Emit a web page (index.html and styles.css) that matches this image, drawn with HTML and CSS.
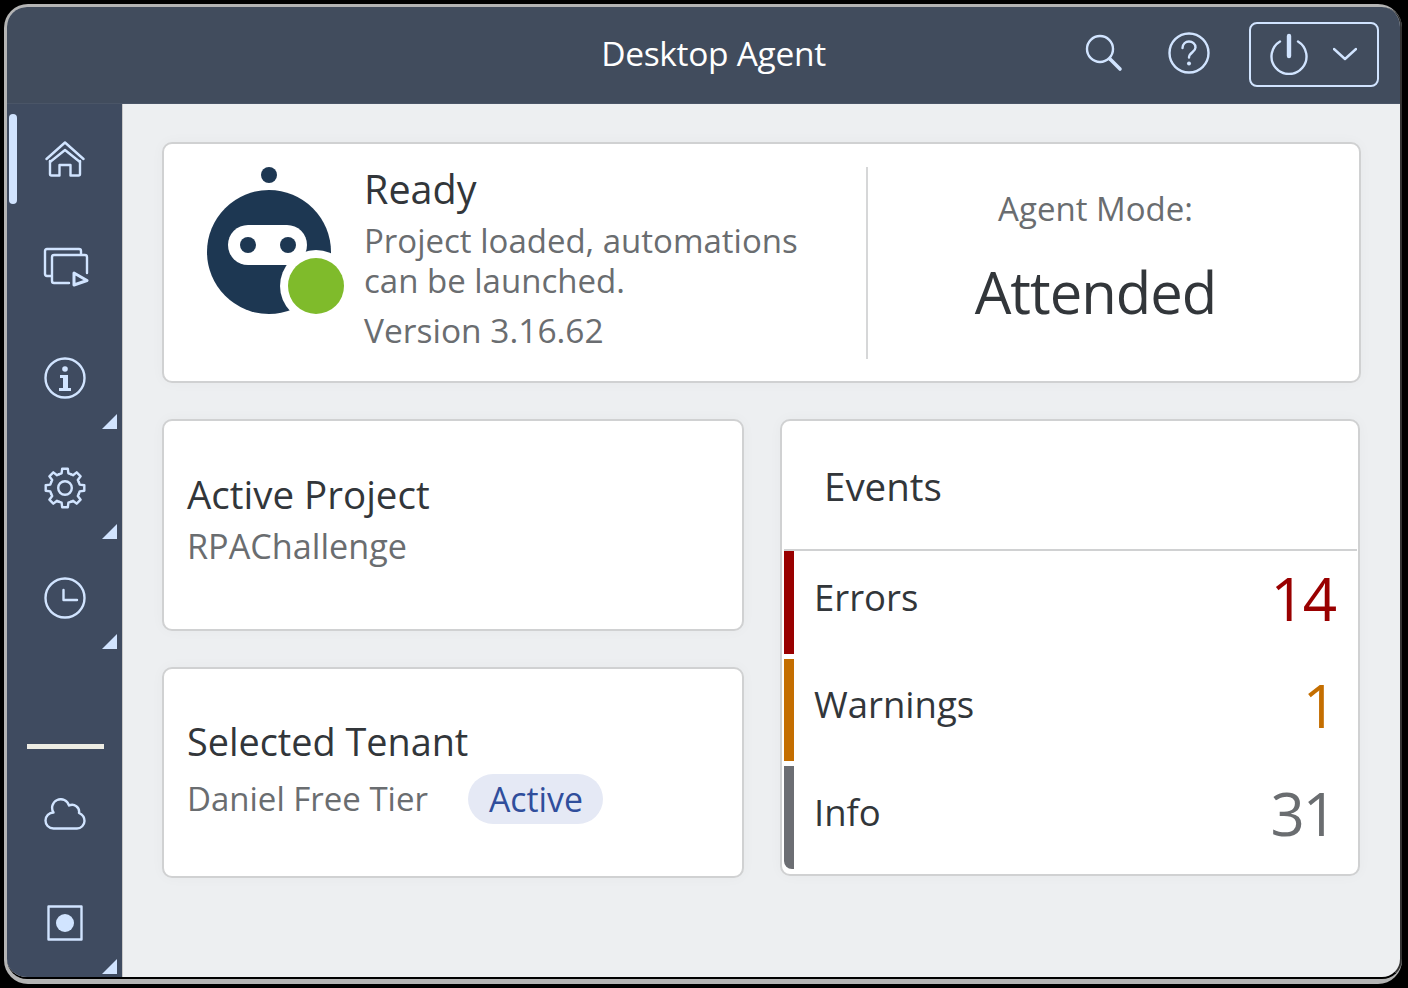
FILE: index.html
```html
<!DOCTYPE html>
<html lang="en">
<head>
<meta charset="UTF-8">
<title>Desktop Agent</title>
<link rel="stylesheet" href="styles.css">
</head>
<body>
<div class="frame">
  <div class="window">
    <header class="topbar">
      <div class="topbar-title">Desktop Agent</div>
      <div class="topbar-actions">
        <svg class="top-icon" width="40" height="40" viewBox="0 0 40 40"><circle cx="15" cy="15" r="13"/><path d="M25 25l10 10" stroke-width="3.6"/></svg>
        <svg class="top-icon" width="42" height="42" viewBox="0 0 42 42"><circle cx="21" cy="21" r="19.500"/><path d="M14.500 16c0-4 3-6.500 6.500-6.500s6.500 2.500 6.500 6c0 4.500-6.500 5-6.500 10"/><circle class="solid" cx="21" cy="31.500" r="2"/></svg>
        <button class="power-btn">
          <svg class="top-icon" width="38" height="42" viewBox="0 0 38 42"><path d="M10 8.500a17.500 17.500 0 1 0 18 0"/><path d="M19 3v20" stroke-width="4.400"/></svg>
          <svg class="top-icon" width="24" height="14" viewBox="0 0 24 14"><path d="M1 2l11 10L23 2"/></svg>
        </button>
      </div>
    </header>
    <div class="app-body">
      <nav class="sidebar">
        <div class="nav-item selected">
          <svg class="nav-icon home-icon" width="40" height="38" viewBox="0 0 40 38"><path d="M1.500 18L20 1.500 38.500 18"/><path d="M5 21L20 9l15 12"/><path d="M5 20v13q0 1.500 1.500 1.500h8V24h11v10.500h8q1.500 0 1.500-1.500V20"/></svg>
        </div>
        <div class="nav-item">
          <svg class="nav-icon copy-icon" width="46" height="40" viewBox="0 0 46 40"><path d="M8 29H4q-2 0-2-2V4q0-2 2-2h32q2 0 2 2v3"/><path d="M26 36H11q-2 0-2-2V10q0-2 2-2h31q2 0 2 2v16"/><path class="play" d="M31 26l13 7.500L31 38z"/></svg>
        </div>
        <div class="nav-item has-menu">
          <svg class="nav-icon" width="42" height="42" viewBox="0 0 42 42"><circle cx="21" cy="21" r="19.500"/><circle class="solid" cx="21" cy="12" r="2.800"/><path class="solid" d="M16 18h8v13h3v3H15v-3h4V21h-3z"/></svg>
        </div>
        <div class="nav-item has-menu">
          <svg class="nav-icon" width="42" height="42" viewBox="-21 -21 42 42">
            <defs><path id="gear-tooth" d="M-5.740-13.860L-3.400-14.700-2.800-19.300H2.800L3.400-14.700 5.740-13.860"/></defs>
            <circle r="6.800"/>
            <use href="#gear-tooth"/>
            <use href="#gear-tooth" transform="rotate(45)"/>
            <use href="#gear-tooth" transform="rotate(90)"/>
            <use href="#gear-tooth" transform="rotate(135)"/>
            <use href="#gear-tooth" transform="rotate(180)"/>
            <use href="#gear-tooth" transform="rotate(225)"/>
            <use href="#gear-tooth" transform="rotate(270)"/>
            <use href="#gear-tooth" transform="rotate(315)"/>
          </svg>
        </div>
        <div class="nav-item has-menu">
          <svg class="nav-icon" width="42" height="42" viewBox="0 0 42 42"><circle cx="21" cy="21" r="19.500"/><path d="M19.500 13v10H33"/></svg>
        </div>
        <div class="nav-divider"></div>
        <div class="nav-item">
          <svg class="nav-icon" width="42" height="32" viewBox="0 0 42 32"><path d="M9.500 30.500C4.500 30.500 1.500 26.500 1.500 22.500 1.500 18 5 14.500 9.500 14.500A8.600 8.600 0 1 1 25 7.500 7 7 0 0 1 35 15C38.500 16.500 40.500 19.500 40.500 23 40.500 27 37 30.500 33 30.500z"/></svg>
        </div>
        <div class="nav-item has-menu">
          <svg class="nav-icon" width="36" height="36" viewBox="0 0 36 36"><rect x="1.500" y="1.500" width="33" height="33"/><circle class="solid" cx="18" cy="18" r="9"/></svg>
        </div>
      </nav>
      <main class="content">
        <section class="card status-card">
          <div class="status-left">
            <svg class="bot-logo" width="140" height="150" viewBox="0 0 140 150">
              <circle cx="64" cy="9" r="8" fill="#1d3752"/>
              <circle cx="64" cy="86" r="62" fill="#1d3752"/>
              <rect x="23" y="59" width="79" height="40" rx="20" fill="#fff"/>
              <circle cx="43" cy="79" r="8" fill="#1d3752"/>
              <circle cx="83" cy="79" r="8" fill="#1d3752"/>
              <circle cx="111" cy="120" r="36" fill="#fff"/>
              <circle cx="111" cy="120" r="28" fill="#7fbb2b"/>
            </svg>
            <div class="status-text">
              <div class="status-title">Ready</div>
              <div class="status-desc">Project loaded, automations<br>can be launched.</div>
              <div class="status-version">Version 3.16.62</div>
            </div>
          </div>
          <div class="status-mode">
            <div class="mode-label">Agent Mode:</div>
            <div class="mode-value">Attended</div>
          </div>
        </section>
        <div class="lower-grid">
          <div class="left-col">
            <section class="card info-card">
              <div class="info-title">Active Project</div>
              <div class="info-sub project-name">RPAChallenge</div>
            </section>
            <section class="card info-card tenant-card">
              <div class="info-title">Selected Tenant</div>
              <div class="tenant-row">
                <span class="info-sub">Daniel Free Tier</span>
                <span class="badge">Active</span>
              </div>
            </section>
          </div>
          <section class="card events-card">
            <div class="events-title">Events</div>
            <div class="event-row errors"><span class="event-name">Errors</span><span class="event-count">14</span></div>
            <div class="event-row warnings"><span class="event-name">Warnings</span><span class="event-count">1</span></div>
            <div class="event-row infos"><span class="event-name">Info</span><span class="event-count">31</span></div>
          </section>
        </div>
      </main>
    </div>
  </div>
</div>
</body>
</html>
```

FILE: styles.css
```css
* { box-sizing: border-box; }
html, body { margin: 0; height: 100%; background: #000; overflow: hidden; }
body { font-family: "Open Sans", "Noto Sans", sans-serif; color: #32363a; }

.frame {
    margin: 4px 6px 4px 4px;
    height: 980px;
    padding: 3px 0 5px 3px;
    background: #b4b4b4;
    border-radius: 24px;
}
.window {
    height: 100%;
    display: flex;
    flex-direction: column;
    background: #edeff1;
    border-bottom: 2px solid #000;
    border-right: 2px solid #333;
    border-radius: 20px;
    overflow: hidden;
}

/* top bar */
.topbar {
    flex: none;
    height: 97px;
    display: flex;
    align-items: center;
    justify-content: flex-end;
    position: relative;
    background: #414c5d;
    border-bottom: 1px solid #4a5567;
    padding: 0 21px 2px 0;
}
.topbar-title {
    position: absolute;
    left: 20px;
    right: 0;
    margin-top: -2px;
    text-align: center;
    color: #fff;
    font-size: 33.5px;
    letter-spacing: -.3px;
}
.topbar-actions { display: flex; align-items: center; }
.top-icon, .nav-icon {
    fill: none;
    stroke: #d1e4ff;
    stroke-width: 2.4;
    stroke-linecap: round;
    stroke-linejoin: round;
    display: block;
}
.top-icon .solid, .nav-icon .solid { fill: #d1e4ff; stroke: none; }
.nav-icon .play { stroke-width: 3; }
.topbar-actions > .top-icon:nth-child(1) { margin-right: 43px; }
.topbar-actions > .top-icon:nth-child(2) { margin: 0 39px 2px 0; }
.power-btn {
    width: 130px;
    height: 65px;
    display: flex;
    align-items: center;
    padding: 0 20px 0 19px;
    justify-content: space-between;
    background: none;
    border: 2px solid #d1e4ff;
    border-radius: 8px;
}

/* side nav */
.app-body { flex: 1; display: flex; min-height: 0; }
.sidebar {
    flex: none;
    width: 116px;
    background: #3f4b60;
    border-right: 1px solid #c8c8c8;
    display: flex;
    flex-direction: column;
}
.nav-item {
    flex: none;
    height: 110px;
    position: relative;
    display: flex;
    align-items: center;
    justify-content: center;
}
.nav-item.selected::before {
    content: "";
    position: absolute;
    left: 2px;
    top: 10px;
    width: 8px;
    height: 90px;
    border-radius: 4px;
    background: #d1e4ff;
}
.nav-item.has-menu::after {
    content: "";
    position: absolute;
    right: 5px;
    bottom: 5px;
    border-style: solid;
    border-width: 0 0 15px 15px;
    border-color: transparent transparent #d1e4ff transparent;
}
.nav-item.has-menu .nav-icon { margin-bottom: 2px; }
.home-icon { margin-top: 2px; }
.copy-icon { margin: 0 0 5px 2px; }
.nav-divider {
    flex: none;
    height: 5px;
    margin: 90px 18px 10px 20px;
    background: #edece4;
}

/* cards */
.content { flex: 1; padding: 38px 39px 0 39px; min-width: 0; }
.card {
    background: #fff;
    border: 2px solid #d0d1d2;
    border-radius: 10px;
    box-shadow: 0 0 14px rgba(0, 0, 0, .03);
}
.status-card { height: 241px; display: flex; align-items: center; }
.status-left { width: 704px; display: flex; height: 192px; align-items: center; border-right: 2px solid #d6d7d8; padding-left: 41px; }
.bot-logo { flex: none; margin-right: 19px; margin-bottom: 43px; }
.status-title { font-size: 39.5px; line-height: 46px; margin-top: -7px; }
.status-desc { font-size: 33px; line-height: 40px; color: #6a6d70; margin-top: 9px; }
.status-version { font-size: 33.5px; line-height: 44px; color: #6a6d70; margin-top: 7px; }
.status-mode { flex: 1; text-align: center; padding: 0 36px 10px 0; }
.mode-label { font-size: 33px; color: #6a6d70; margin-bottom: 23px; }
.mode-value { font-size: 58px; line-height: 76px; letter-spacing: -1px; }

.lower-grid { display: grid; grid-template-columns: 582px 580px; gap: 36px; margin-top: 36px; align-items: start; }
.left-col { display: flex; flex-direction: column; gap: 36px; }
.info-card { height: 212px; padding: 45px 23px 0; }
.tenant-card { height: 211px; }
.tenant-card .info-title { font-size: 37.8px; }
.info-title { font-size: 38.5px; line-height: 56px; }
.info-sub { font-size: 33px; line-height: 48px; color: #6a6d70; }
.project-name { font-size: 34.2px; }
.tenant-row { display: flex; align-items: center; gap: 40px; margin-top: 4px; }
.badge {
    height: 50px;
    padding: 0 20px 0 21px;
    border-radius: 25px;
    background: #e5e9f5;
    color: #304e9c;
    font-size: 33.8px;
    line-height: 50px;
}

.events-card { height: 457px; padding: 0 1px 0 2px; }
.events-title { height: 130px; padding-left: 40px; font-size: 38.5px; line-height: 130px; border-bottom: 2px solid #d0d1d2; }
.event-row {
    height: 103px;
    margin-bottom: 5px;
    display: flex;
    align-items: center;
    justify-content: space-between;
    padding: 0 22px 12px 20px;
    border-left: 10px solid;
}
.event-row:last-child { margin-bottom: 0; border-bottom-left-radius: 8px; }
.event-name { font-size: 36.5px; }
.event-count { font-size: 60px; letter-spacing: -2px; margin-bottom: -2px; }
.errors { border-left-color: #990000; }
.errors .event-count { color: #990000; }
.warnings { height: 102px; border-left-color: #c46e00; }
.warnings .event-count { color: #c46e00; }
.infos { border-left-color: #6c6e73; }
.infos .event-count { color: #6a6d70; }
```
